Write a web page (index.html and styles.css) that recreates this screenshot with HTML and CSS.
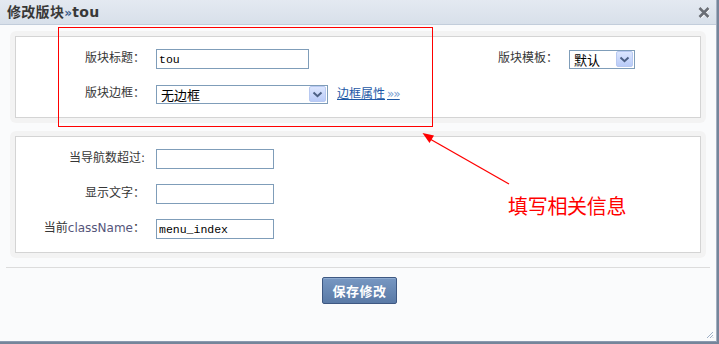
FILE: index.html
```html
<!DOCTYPE html>
<html lang="zh-CN">
<head>
<meta charset="utf-8">
<title>修改版块»tou</title>
<link rel="stylesheet" href="styles.css">
</head>
<body>
<div class="dialog">
  <div class="titlebar">
    <h1 class="title">修改版块<span class="title-sep">»</span>tou</h1>
    <span class="close" aria-label="关闭">
      <svg width="12" height="11" viewBox="0 0 12 11"><path d="M1.5 1 L10.5 10 M10.5 1 L1.5 10" stroke="#fff" stroke-width="3" transform="translate(0.6,0.6)"/><path d="M1.5 1 L10.5 10 M10.5 1 L1.5 10" stroke="#6a6e75" stroke-width="2.6"/></svg>
    </span>
  </div>

  <div class="content">
    <div class="panel">
      <div class="panel-inner panel-top">
        <div class="form-grid">
          <span class="label">版块标题：</span>
          <div class="field"><input class="input input-wide" type="text" value="tou"></div>
          <span class="label">版块边框：</span>
          <div class="field">
            <div class="select select-border">
              <span class="select-text">无边框</span>
              <span class="select-btn"><svg width="11" height="7" viewBox="0 0 11 7"><path d="M1.5 1.5 L5.5 5.2 L9.5 1.5" fill="none" stroke="#4d6185" stroke-width="2"/></svg></span>
            </div>
            <a class="link" href="#">边框属性<span class="link-arrows">»»</span></a>
          </div>
        </div>
        <div class="template-field">
          <span class="label">版块模板：</span>
          <div class="select select-template">
            <span class="select-text">默认</span>
            <span class="select-btn"><svg width="11" height="7" viewBox="0 0 11 7"><path d="M1.5 1.5 L5.5 5.2 L9.5 1.5" fill="none" stroke="#4d6185" stroke-width="2"/></svg></span>
          </div>
        </div>
      </div>
    </div>

    <div class="panel panel-second">
      <div class="panel-inner">
        <div class="form-grid">
          <span class="label">当导航数超过:</span>
          <div class="field"><input class="input input-narrow" type="text" value=""></div>
          <span class="label">显示文字：</span>
          <div class="field"><input class="input input-narrow" type="text" value=""></div>
          <span class="label">当前<span class="latin">className</span>：</span>
          <div class="field"><input class="input input-narrow" type="text" value="menu_index"></div>
        </div>
      </div>
    </div>

    <div class="separator"></div>

    <div class="actions">
      <button class="btn" type="button">保存修改</button>
    </div>
  </div>

  <svg class="grip" width="8" height="8" viewBox="0 0 8 8"><path d="M7 1 L1 7 M7 4 L4 7 M7 6.5 L6.5 7" stroke="#9fb0c6" stroke-width="1"/></svg>

  <div class="annotation-box"></div>
  <svg class="annotation-arrow" width="717" height="342" viewBox="0 0 717 342">
    <line x1="509" y1="184" x2="430" y2="139" stroke="#ff0000" stroke-width="1.3"/>
    <polygon points="422.5,133 434,135.5 429.5,143" fill="#ff0000"/>
  </svg>
  <div class="annotation-text">填写相关信息</div>
</div>
</body>
</html>
```

FILE: styles.css
```css
html, body {
  margin: 0;
  padding: 0;
}

body {
  background: #75859a;
  width: 719px;
  height: 344px;
  overflow: hidden;
  font-family: "DejaVu Sans", "Noto Sans CJK SC", sans-serif;
  font-size: 12px;
  color: #363636;
}

.dialog {
  position: relative;
  width: 716px;
  height: 341px;
  background: #fafbfc;
  border-right: 1px solid #a3b0c1;
  border-bottom: 1px solid #8b9ab0;
}

.titlebar {
  height: 25px;
  box-sizing: border-box;
  display: flex;
  align-items: center;
  justify-content: space-between;
  padding: 0 5px 0 7px;
  background: linear-gradient(#e4e9f1, #d8e0ea);
  border-bottom: 1px solid #c2cddb;
}

.title {
  margin: 0;
  font-family: "DejaVu Sans", "Noto Sans CJK SC", sans-serif;
  font-size: 14px;
  font-weight: bold;
  color: #383838;
  letter-spacing: 0.3px;
  line-height: 18px;
  padding-top: 1px;
}

.title-sep {
  color: #3a5c8c;
  font-size: 12px;
}

.close {
  display: flex;
  width: 13px;
  height: 12px;
  margin-top: 1px;
}

.content {
  padding: 6px 10px 0 10px;
}

.panel {
  background: #f3f3f3;
  border-radius: 6px;
  padding: 5px;
}

.panel-second {
  margin-top: 8px;
}

.panel-inner {
  background: #ffffff;
  border: 1px solid #d4d4d4;
  padding: 12px 0 13px 0;
}

.panel-top {
  display: flex;
  align-items: flex-start;
}

.form-grid {
  display: grid;
  grid-template-columns: 129px auto;
  column-gap: 11px;
  row-gap: 15px;
  align-items: center;
}

.label {
  text-align: right;
  line-height: 16px;
  padding-bottom: 3px;
  white-space: nowrap;
}

.latin {
  color: #55557a;
}

.field {
  display: flex;
  align-items: center;
  height: 20px;
}

.input {
  box-sizing: border-box;
  height: 20px;
  margin: 0;
  padding: 0 2px;
  border: 1px solid #7f9db9;
  background: #fff;
  font-family: "Liberation Mono", monospace;
  font-size: 11.5px;
  color: #000;
  outline: none;
}

.input-wide {
  width: 153px;
}

.input-narrow {
  width: 118px;
}

.select {
  box-sizing: border-box;
  height: 19px;
  display: flex;
  align-items: center;
  border: 1px solid #7f9db9;
  background: #fff;
  padding-right: 1px;
}

.select-border {
  width: 172px;
}

.select-template {
  width: 66px;
}

.select-text {
  padding-left: 4px;
  font-size: 13px;
  line-height: 15px;
  color: #000;
  font-family: "Noto Sans CJK SC", sans-serif;
}

.select-btn {
  margin-left: auto;
  box-sizing: border-box;
  width: 17px;
  height: 16px;
  display: flex;
  align-items: center;
  justify-content: center;
  border: 1px solid #b8c9f1;
  border-radius: 2px;
  background: linear-gradient(#dce6fe, #b9cbf8);
}

.link {
  margin-left: 9px;
  color: #1d58a6;
  text-decoration: underline;
  line-height: 16px;
  padding-bottom: 1px;
  font-family: "Noto Sans CJK SC", sans-serif;
}

.link-arrows {
  font-size: 12px;
  color: #7d9fd2;
  letter-spacing: -1px;
  margin-left: 2px;
  font-family: "DejaVu Sans", sans-serif;
}

.template-field {
  margin-left: auto;
  margin-right: 65px;
  height: 20px;
  display: flex;
  align-items: center;
  gap: 11px;
}

.separator {
  height: 1px;
  background: #dcdcdc;
  margin: 9px -4px 0 -4px;
}

.actions {
  display: flex;
  justify-content: center;
  padding-top: 9px;
  padding-left: 3px;
}

.btn {
  box-sizing: border-box;
  width: 75px;
  height: 27px;
  margin: 0;
  padding: 0;
  border: 1px solid #3e5882;
  border-radius: 2px;
  background: linear-gradient(#7797c2, #5a7aa6);
  box-shadow: inset 0 1px 0 #8eabd1;
  color: #fff;
  font-family: "Noto Sans CJK SC", sans-serif;
  font-size: 13px;
  font-weight: bold;
  letter-spacing: 0.5px;
}

.grip {
  position: absolute;
  right: 2px;
  bottom: 2px;
}

.annotation-box {
  position: absolute;
  left: 58px;
  top: 27px;
  width: 375px;
  height: 100px;
  box-sizing: border-box;
  border: 1px solid #ff0000;
}

.annotation-arrow {
  position: absolute;
  left: 0;
  top: 0;
  pointer-events: none;
}

.annotation-text {
  position: absolute;
  left: 508px;
  top: 194px;
  font-family: "Noto Sans CJK SC", sans-serif;
  font-size: 20px;
  line-height: 24px;
  color: #ff0000;
  letter-spacing: -0.3px;
}
```
